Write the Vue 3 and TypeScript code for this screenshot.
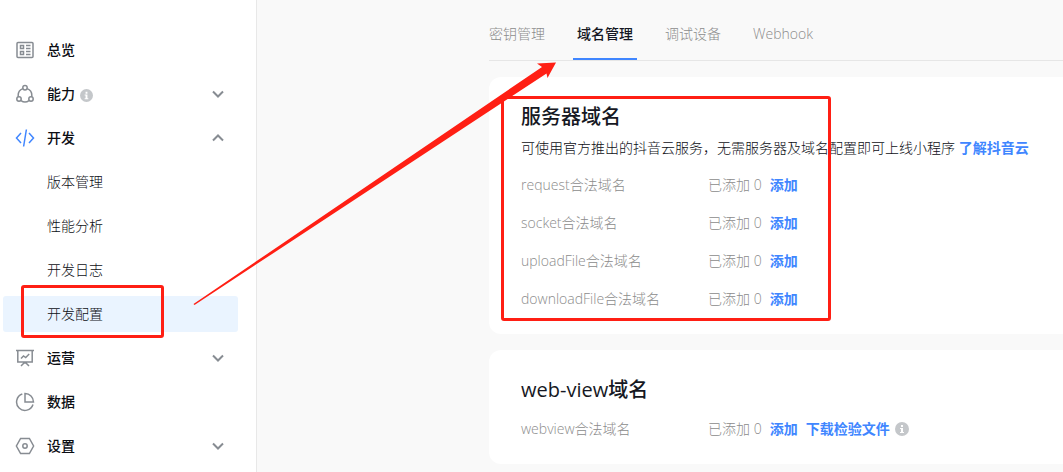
<script setup lang="ts">
import { ref } from 'vue'

interface NavItem {
  label: string
  icon: string
  info?: boolean
  arrow?: 'up' | 'down'
  children?: string[]
}

const nav: NavItem[] = [
  { label: '总览', icon: 'overview' },
  { label: '能力', icon: 'ability', info: true, arrow: 'down' },
  { label: '开发', icon: 'code', arrow: 'up', children: ['版本管理', '性能分析', '开发日志', '开发配置'] },
  { label: '运营', icon: 'board', arrow: 'down' },
  { label: '数据', icon: 'pie' },
  { label: '设置', icon: 'settings', arrow: 'down' },
]

const tabs = ['密钥管理', '域名管理', '调试设备', 'Webhook']
const activeTab = ref('域名管理')
const activePage = ref('开发配置')

const serverDomains = ['request合法域名', 'socket合法域名', 'uploadFile合法域名', 'downloadFile合法域名']
</script>

<template>
  <div class="page">
    <nav class="sidebar">
      <template v-for="item in nav" :key="item.label">
        <button class="nav-item" type="button">
          <svg class="nav-icon" :class="{ blue: item.icon === 'code' }" viewBox="0 0 20 20" aria-hidden="true">
            <template v-if="item.icon === 'overview'">
              <rect x="2" y="2.5" width="16" height="15" rx="1" />
              <path d="M5.5 5.5h3v3h-3zM5.5 11.5h3v3h-3zM11 5.5h4.5M11 8.5h4.5M11 11.5h4.5M11 14.5h4.5" />
            </template>
            <template v-else-if="item.icon === 'ability'">
              <circle cx="10" cy="3.7" r="2.2" />
              <circle cx="4" cy="15" r="2.2" />
              <circle cx="16" cy="15" r="2.2" />
              <path d="M7.8 4.6C4.6 5.8 2.8 9.2 3.3 12.8M12.2 4.6c3.2 1.2 5 4.6 4.5 8.2M6 16.6c2.4 1.7 5.6 1.7 8 0" />
            </template>
            <template v-else-if="item.icon === 'code'">
              <path d="M6 5 1.5 10 6 15M14 5l4.5 5-4.5 5M11.4 1.5 8.6 18.5" />
            </template>
            <template v-else-if="item.icon === 'board'">
              <path d="M1 2.5h18M2.8 2.5V14h14.4V2.5M6 10.5 8.5 8l2.2 1.5L14.2 6M10 14v1M6 18l3-3h2l3 3" />
            </template>
            <template v-else-if="item.icon === 'pie'">
              <path d="M7.3 2A8.4 8.4 0 1 0 18 12.5M10 1.5a8.5 8.5 0 0 1 8.5 8.5H10z" />
            </template>
            <template v-else>
              <path d="M5.6 2.5h8.8L18.6 10l-4.2 7.5H5.6L1.4 10z" />
              <circle cx="10" cy="10" r="2.2" />
            </template>
          </svg>
          <span class="nav-label">{{ item.label }}</span>
          <svg v-if="item.info" class="info small" viewBox="0 0 14 14" aria-hidden="true">
            <circle cx="7" cy="7" r="7" />
            <path d="M6 3h2v2H6zM5 6h3v4h1v1H5v-1h1V7H5z" />
          </svg>
          <svg v-if="item.arrow" class="chevron" viewBox="0 0 12 12" aria-hidden="true">
            <path :d="item.arrow === 'down' ? 'M1 3.5l5 5 5-5' : 'M1 8.5l5-5 5 5'" />
          </svg>
        </button>
        <button
          v-for="child in item.children"
          :key="child"
          class="nav-item child"
          :class="{ selected: child === activePage }"
          type="button"
          @click="activePage = child"
        >
          {{ child }}
        </button>
      </template>
    </nav>

    <main class="main">
      <div class="tabs" role="tablist">
        <button
          v-for="tab in tabs"
          :key="tab"
          class="tab"
          :class="{ active: tab === activeTab }"
          type="button"
          role="tab"
          :aria-selected="tab === activeTab"
          @click="activeTab = tab"
        >
          {{ tab }}
        </button>
      </div>

      <section class="card">
        <h2>服务器域名</h2>
        <p class="desc">可使用官方推出的抖音云服务，无需服务器及域名配置即可上线小程序 <a href="#">了解抖音云</a></p>
        <div class="rows">
          <div v-for="name in serverDomains" :key="name" class="row">
            <span class="row-label">{{ name }}</span>
            <span class="count">已添加 0</span>
            <button class="action" type="button">添加</button>
          </div>
        </div>
      </section>

      <section class="card">
        <h2>web-view域名</h2>
        <div class="rows">
          <div class="row">
            <span class="row-label">webview合法域名</span>
            <span class="count">已添加 0</span>
            <button class="action" type="button">添加</button>
            <a class="action" href="#">下载检验文件</a>
            <svg class="info" viewBox="0 0 14 14" aria-hidden="true">
              <circle cx="7" cy="7" r="7" />
              <path d="M6 3h2v2H6zM5 6h3v4h1v1H5v-1h1V7H5z" />
            </svg>
          </div>
        </div>
      </section>
    </main>

    <div class="mark mark-menu"></div>
    <div class="mark mark-domains"></div>
    <svg class="pointer" viewBox="0 0 364 244" aria-hidden="true">
      <path d="M0.5 242 349 5l-5-3.5L363 .5 354.500 16l-1-4.500L1.500 243z" />
    </svg>
  </div>
</template>

<style>
body {
  margin: 0;
  background: #f9f9f9;
}
</style>

<style scoped>
.page {
  position: relative;
  display: flex;
  min-height: 100vh;
  overflow: hidden;
  box-sizing: border-box;
  background: #f9f9f9;
  color: #0c0e14;
  font: 300 14px/20px "Open Sans", "Noto Sans CJK SC", sans-serif;
}
button {
  border: 0;
  padding: 0;
  background: none;
  color: inherit;
  font: inherit;
  cursor: pointer;
}
a {
  color: #4086ff;
  font-weight: 700;
  text-decoration: none;
}
.sidebar {
  flex: none;
  display: flex;
  flex-direction: column;
  gap: 8px;
  box-sizing: border-box;
  width: 257px;
  padding: 32px 18px 0 3px;
  border-right: 1px solid #e8e8e8;
  background: #fff;
}
.nav-item {
  display: flex;
  align-items: center;
  height: 36px;
  padding: 0 14px 0 12px;
  border-radius: 3px;
  text-align: left;
}
.nav-item.child {
  padding-left: 44px;
}
.selected {
  background: #eaf4ff;
}
.nav-icon {
  width: 20px;
  height: 20px;
  margin-right: 12px;
  fill: none;
  stroke: #878c92;
  stroke-width: 1.5;
}
.nav-icon.blue {
  stroke: #4086ff;
}
.nav-label {
  font-weight: 500;
}
.info {
  width: 14px;
  height: 14px;
  margin-left: 5px;
  fill: #c4c7ca;
}
.info.small {
  width: 13px;
  height: 13px;
  margin-top: 3px;
}
.info path {
  fill: #fff;
}
.chevron {
  width: 12px;
  height: 12px;
  margin-left: auto;
  fill: none;
  stroke: #878c92;
  stroke-width: 2;
}
.main {
  flex: 1;
  min-width: 0;
  padding-left: 232px;
}
.tabs {
  display: flex;
  gap: 24px;
  height: 60px;
  margin-bottom: 16px;
  border-bottom: 1px solid #e6e6e6;
}
.tab {
  box-sizing: border-box;
  padding: 10px 4px 0;
  border-bottom: 2px solid transparent;
  color: #8c8c8c;
}
.tab:first-child {
  padding-left: 0;
}
.tab.active {
  border-color: #4086ff;
  color: #161823;
  font-weight: 500;
}
.card {
  margin-bottom: 16px;
  padding: 26px 0 16px 32px;
  border-radius: 12px 0 0 12px;
  background: #fff;
}
h2 {
  margin: 0;
  color: #161823;
  font-size: 20px;
  line-height: 28px;
  font-weight: 500;
}
.desc {
  margin: 7px 0 2px;
  white-space: nowrap;
}
.rows {
  padding-top: 6px;
}
.row {
  display: flex;
  align-items: center;
  height: 38px;
  color: #8c8c8c;
}
.row-label {
  width: 187px;
}
.action {
  margin-left: 8px;
  color: #4086ff;
  font-weight: 700;
}
.mark {
  position: absolute;
  box-sizing: border-box;
  border: 3px solid #ff1f14;
  border-radius: 3px;
  pointer-events: none;
}
.mark-menu {
  left: 21px;
  top: 285px;
  width: 143px;
  height: 53px;
}
.mark-domains {
  left: 501px;
  top: 96px;
  width: 330px;
  height: 225px;
}
.pointer {
  position: absolute;
  left: 193px;
  top: 62px;
  width: 364px;
  height: 244px;
  fill: #ff1f14;
  pointer-events: none;
}
</style>
